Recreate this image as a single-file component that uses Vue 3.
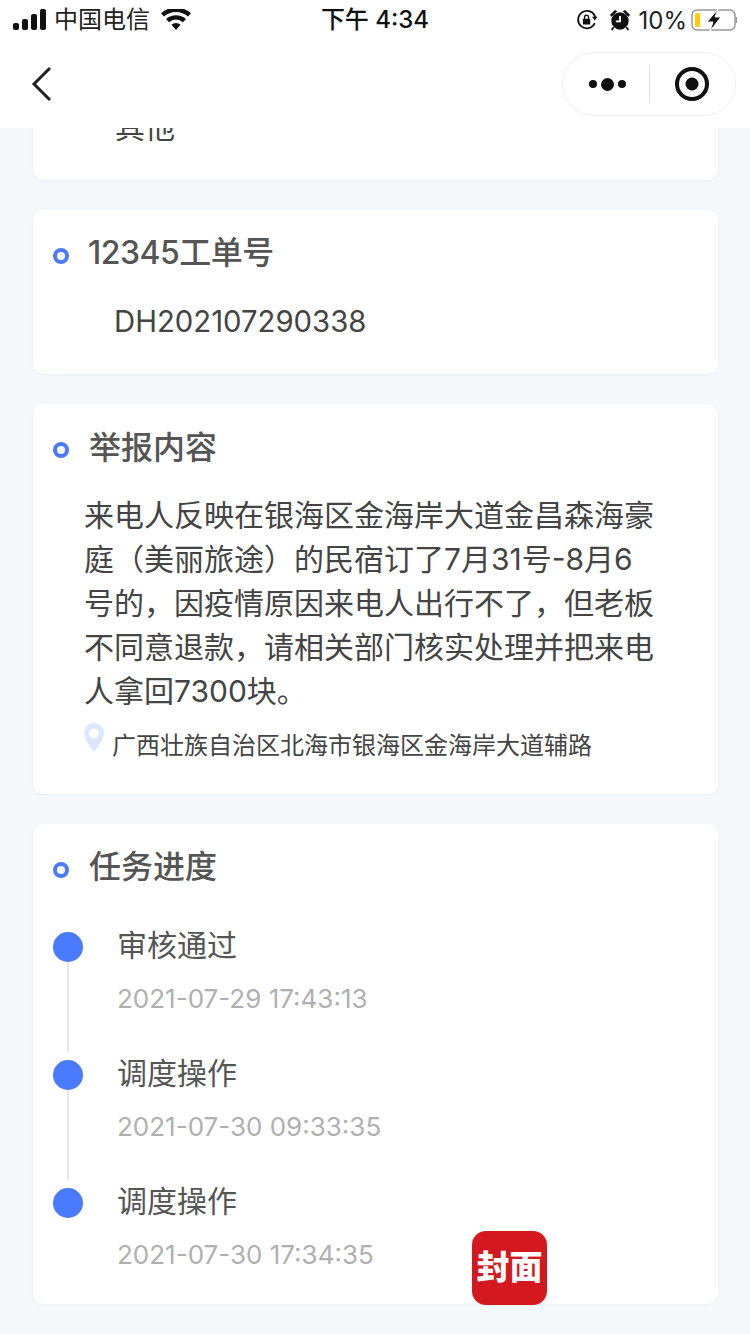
<script setup>
const steps = [
  { name: '审核通过', time: '2021-07-29 17:43:13' },
  { name: '调度操作', time: '2021-07-30 09:33:35' },
  { name: '调度操作', time: '2021-07-30 17:34:35' },
]
const lines = [
  '来电人反映在银海区金海岸大道金昌森海豪',
  '庭（美丽旅途）的民宿订了7月31号-8月6',
  '号的，因疫情原因来电人出行不了，但老板',
  '不同意退款，请相关部门核实处理并把来电',
  '人拿回7300块。',
]
</script>

<template>
  <div class="page">
    <header class="head">
      <div class="status">
        <div class="st-left">
          <svg class="signal" width="34" height="22" viewBox="0 0 34 22"><rect x="0" y="14" width="6" height="7" rx="2"/><rect x="9" y="10" width="6" height="11" rx="2"/><rect x="18" y="5" width="6" height="16" rx="2"/><rect x="27" y="0" width="6" height="21" rx="2"/></svg>
          <span class="carrier">中国电信</span>
          <svg class="wifi" width="30" height="22" viewBox="0 0 30 22"><path d="M15 21l-4.600-5.200a7 7 0 0 1 9.200 0z" /><path d="M8 13.200l-2.900-3.200a15 15 0 0 1 19.800 0l-2.900 3.200a10.700 10.700 0 0 0-14 0z"/><path d="M3 7.600L0 4.300a22.500 22.500 0 0 1 30 0l-3 3.300a18 18 0 0 0-24 0z"/></svg>
        </div>
        <div class="st-time">下午 4:34</div>
        <div class="st-right">
          <svg width="22" height="22" viewBox="0 0 24 24" class="lock"><path d="M20.500 15.500A9.500 9.500 0 1 1 21 9" fill="none" stroke="#111" stroke-width="2"/><path d="M17.500 8.500h6l-3 4z" fill="#111"/><rect x="7.500" y="10.500" width="8" height="6.500" rx="1" fill="#111"/><path d="M9.300 11V9a2.200 2.200 0 0 1 4.400 0v2" fill="none" stroke="#111" stroke-width="1.500"/></svg>
          <svg width="22" height="22" viewBox="0 0 24 24" class="alarm"><circle cx="12" cy="13" r="9.500" fill="#111"/><path d="M12 7.500v6H7.500" fill="none" stroke="#fff" stroke-width="2"/><path d="M1 6.500l5.500-5.500 2.500 1.500-6 6zM23 6.500l-5.500-5.500-2.500 1.500 6 6z" fill="#111"/><path d="M5 20l-2 3M19 20l2 3" stroke="#111" stroke-width="2"/></svg>
          <span class="pct">10%</span>
          <svg width="46" height="24" viewBox="0 0 46 24" class="batt"><rect x="1" y="2" width="43" height="20" rx="5" fill="none" stroke="#999" stroke-width="1.500"/><rect x="4" y="5" width="5" height="14" rx="1.500" fill="#ffcc00"/><path d="M27 1L16 14h6l-3 9 11-14h-6l3-8z" fill="#111" stroke="#fff" stroke-width="1"/><path d="M45.300 9v6" stroke="#999" stroke-width="1.500"/></svg>
        </div>
      </div>
      <nav class="nav">
        <svg class="back" width="24" height="36" viewBox="0 0 24 36"><path d="M20 2L4 18l16 16" fill="none" stroke="#222" stroke-width="3"/></svg>
        <div class="capsule">
          <div class="dots"><i class="d-s"></i><i class="d-l"></i><i class="d-s"></i></div>
          <div class="sep"></div>
          <svg class="target" width="36" height="36" viewBox="0 0 36 36"><circle cx="18" cy="18" r="15" fill="none" stroke="#111" stroke-width="4"/><circle cx="18" cy="18" r="6.500" fill="#111"/></svg>
        </div>
      </nav>
    </header>

    <main class="scroll">
      <section class="card first">
        <p class="value">其他</p>
      </section>

      <section class="card order">
        <h2 class="title num"><i class="ring"></i>12345工单号</h2>
        <p class="value code">DH202107290338</p>
      </section>

      <section class="card report">
        <h2 class="title rep"><i class="ring"></i>举报内容</h2>
        <p class="body">
          <span v-for="l in lines" :key="l" class="ln">{{ l }}</span>
        </p>
        <div class="addr">
          <svg width="20" height="30" viewBox="0 0 20 30"><path fill-rule="evenodd" d="M10 0a10 10 0 0 1 10 10c0 7-10 19-10 19S0 17 0 10A10 10 0 0 1 10 0zm0 5.500a5 5 0 1 0 0 10 5 5 0 0 0 0-10z" fill="#dce7fd"/></svg>
          <span>广西壮族自治区北海市银海区金海岸大道辅路</span>
        </div>
      </section>

      <section class="card progress">
        <h2 class="title"><i class="ring"></i>任务进度</h2>
        <ul class="steps">
          <li v-for="(s, i) in steps" :key="i" class="step">
            <div class="rail">
              <i class="dot"></i>
              <i v-if="i < steps.length - 1" class="line"></i>
            </div>
            <div class="info">
              <div class="name">{{ s.name }}</div>
              <div class="time">{{ s.time }}</div>
            </div>
          </li>
        </ul>
      </section>

      <div class="logo">封面</div>
    </main>
  </div>
</template>

<style>
html, body { margin: 0; background: #f5f8fb; }
</style>

<style scoped>
.page {
  width: 750px;
  height: 1334px;
  overflow: hidden;
  display: flex;
  flex-direction: column;
  background: #f5f8fb;
  font-family: Inter, "Noto Sans CJK SC", sans-serif;
  color: #444;
}
.head { background: #fff; height: 128px; flex: none; position: relative; z-index: 2; }
.status {
  height: 40px;
  display: grid;
  grid-template-columns: 1fr auto 1fr;
  align-items: center;
  padding: 0 13px;
  color: #111;
}
.st-left { display: flex; align-items: center; }
.signal { fill: #111; margin-right: 7px; }
.carrier { font-size: 24px; line-height: 40px; color: #222; }
.wifi { fill: #111; margin-left: 11px; }
.st-time { font-size: 24px; font-weight: 500; line-height: 40px; }
.st-right { display: flex; align-items: center; justify-content: flex-end; }
.lock { margin-right: 11px; }
.alarm { margin-right: 8px; }
.pct { font-size: 24px; color: #222; margin-right: 4px; }
.nav {
  height: 88px;
  display: flex;
  align-items: center;
  justify-content: space-between;
  padding: 0 14px 0 30px;
  box-sizing: border-box;
}
.back { display: block; }
.capsule {
  width: 174px;
  height: 64px;
  box-sizing: border-box;
  border: 1px solid #eeeeee;
  border-radius: 32px;
  display: flex;
  align-items: center;
  background: #fff;
}
.dots { display: flex; align-items: center; gap: 4px; margin-left: 26px; }
.dots i { display: block; border-radius: 50%; background: #111; }
.d-s { width: 8px; height: 8px; }
.d-l { width: 13px; height: 13px; }
.sep { width: 1px; height: 38px; background: #ddd; margin-left: 23px; margin-right: 24px; }
.target { display: block; }

.scroll {
  flex: 1;
  min-height: 0;
  position: relative;
  padding: 0 32px 0 33px;
  display: flex;
  flex-direction: column;
  gap: 30px;
}
.card {
  background: #fff;
  border-radius: 10px;
  box-shadow: 0 1px 3px rgba(30, 50, 90, 0.05);
  flex: none;
}
.first { margin-top: -48px; padding: 25px 0 31px 82px; }
.order { padding: 21px 0 30px 20px; }
.report { padding: 22px 0 25px 20px; height: 390px; box-sizing: border-box; }
.progress { padding: 21px 0 0 20px; height: 480px; box-sizing: border-box; }

.title {
  display: flex;
  align-items: center;
  margin: 0;
  font-size: 32px;
  line-height: 44px;
  font-weight: 500;
  color: #555;
}
.title.num { letter-spacing: -0.5px; }
.ring {
  flex: none;
  width: 16px;
  height: 16px;
  box-sizing: border-box;
  border: 4px solid #4a7aff;
  border-radius: 50%;
  margin-right: 20px;
  margin-top: 5px;
}
.num .ring { margin-right: 19px; margin-top: 6px; }
.rep .ring { margin-top: 4px; }
.value { margin: 0; font-size: 30px; line-height: 44px; color: #444; }
.code { margin: 25px 0 0 61px; font-size: 29.3px; }
.body { margin: 23px 0 0 31px; font-size: 30px; line-height: 44px; color: #444; }
.ln { display: block; white-space: nowrap; }
.addr {
  display: flex;
  align-items: flex-start;
  margin: 13px 0 0 32px;
  font-size: 24px;
  line-height: 40px;
  color: #444;
}
.addr svg { flex: none; margin-left: -1px; margin-right: 8px; margin-top: -3px; display: block; }
.steps { list-style: none; margin: 35px 0 0; padding: 0; }
.step { display: flex; height: 128px; }
.rail { width: 30px; flex: none; display: flex; flex-direction: column; align-items: center; padding-top: 8px; }
.dot { width: 30px; height: 30px; border-radius: 50%; background: #4a7aff; flex: none; display: block; }
.line { width: 2px; height: 90px; background: #e8e8e8; display: block; }
.info { margin-left: 34px; margin-top: -1px; }
.name { font-size: 30px; line-height: 44px; color: #555; }
.time { font-size: 26px; line-height: 36px; margin-top: 14px; color: #b0b0b0; white-space: nowrap; }
.logo {
  position: absolute;
  left: 472px;
  top: 1103px;
  width: 75px;
  height: 74px;
  border-radius: 14px;
  background: #d4181f;
  color: #fff;
  font-size: 33px;
  font-weight: 900;
  line-height: 72px;
  text-align: center;
  z-index: 3;
}
</style>
